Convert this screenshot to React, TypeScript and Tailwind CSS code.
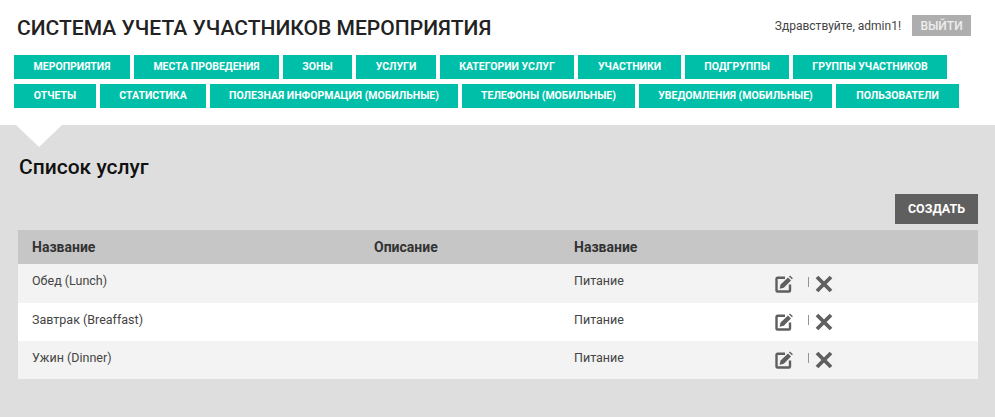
const rowOne = [
  { label: 'Мероприятия', width: 'w-[116px]' },
  { label: 'Места проведения', width: 'w-[145px]' },
  { label: 'Зоны', width: 'w-[69px]' },
  { label: 'Услуги', width: 'w-[80px]' },
  { label: 'Категории услуг', width: 'w-[134px]' },
  { label: 'Участники', width: 'w-[103px]' },
  { label: 'Подгруппы', width: 'w-[104px]' },
  { label: 'Группы участников', width: 'w-[154px]' },
];

const rowTwo = [
  { label: 'Отчеты', width: 'w-[82px]' },
  { label: 'Статистика', width: 'w-[106px]' },
  { label: 'Полезная информация (мобильные)', width: 'w-[248px]' },
  { label: 'Телефоны (мобильные)', width: 'w-[173px]' },
  { label: 'Уведомления (мобильные)', width: 'w-[193px]' },
  { label: 'Пользователи', width: 'w-[123px]' },
];

const services = [
  { name: 'Обед (Lunch)', category: 'Питание', bg: 'bg-[#f3f3f3]', height: 'h-[39px]' },
  { name: 'Завтрак (Breaffast)', category: 'Питание', bg: 'bg-white', height: 'h-[38px]' },
  { name: 'Ужин (Dinner)', category: 'Питание', bg: 'bg-[#f3f3f3]', height: 'h-[38px]' },
];

function MenuRow({ items }: { items: { label: string; width: string }[] }) {
  return (
    <div className="flex gap-1">
      {items.map((item) => (
        <a
          key={item.label}
          className={`${item.width} flex h-6 items-center justify-center bg-[#00bfa9] text-[10.5px] font-bold uppercase text-white`}
        >
          {item.label}
        </a>
      ))}
    </div>
  );
}

function EditIcon() {
  return (
    <svg width="18" height="18" viewBox="0 0 18 18" className="text-[#5f5f5f]">
      <path
        d="M10 2.8H2.5A1 1 0 0 0 1.5 3.8v11.7a1 1 0 0 0 1 1H14a1 1 0 0 0 1-1V9.5"
        fill="none"
        stroke="currentColor"
        strokeWidth="2.4"
      />
      <path d="M4.6 13.8l1-4.4 7.4-7 3 3-7.2 7.3z" fill="currentColor" />
      <path d="M14 1.4l1-1 2.9 2.9-1 1z" fill="currentColor" />
    </svg>
  );
}

function DeleteIcon() {
  return (
    <svg width="18" height="18" viewBox="0 0 18 18" className="text-[#5f5f5f]">
      <path d="M2 2l14 14M16 2L2 16" fill="none" stroke="currentColor" strokeWidth="3.8" />
    </svg>
  );
}

export default function App() {
  return (
    <div className="flex h-[417px] w-[995px] flex-col overflow-hidden bg-white font-['Roboto',sans-serif]">
      <header className="h-[125px] shrink-0 pl-[14px]">
        <div className="flex h-[55px] items-start justify-between pr-6">
          <h1 className="ml-[3px] mt-[14px] text-[21.05px] leading-7 font-medium text-[#222]">
            СИСТЕМА УЧЕТА УЧАСТНИКОВ МЕРОПРИЯТИЯ
          </h1>
          <div className="mt-[15px] flex items-center gap-[11px]">
            <span className="text-xs text-[#444]">Здравствуйте, admin1!</span>
            <a className="flex h-[21px] w-[59px] items-center justify-center bg-[#aeaeae] text-xs font-medium text-[#eee]">
              ВЫЙТИ
            </a>
          </div>
        </div>
        <nav className="flex flex-col gap-[5px]">
          <MenuRow items={rowOne} />
          <MenuRow items={rowTwo} />
        </nav>
      </header>

      <main className="relative flex-1 bg-[#dedede] pl-[18px] pr-[17px]">
        <div className="absolute left-4 top-0 h-[22px] w-[46px] bg-white [clip-path:polygon(0_0,100%_0,50%_100%)]" />
        <h2 className="ml-px pt-[28px] text-[21px] leading-7 font-medium text-[#111]">Список услуг</h2>
        <div className="mt-[13px] flex justify-end">
          <a className="flex h-[30px] w-[83px] items-center justify-center bg-[#5f5f5f] text-[12.5px] font-bold text-white">
            СОЗДАТЬ
          </a>
        </div>
        <table className="mt-1.5 w-full table-fixed border-collapse text-left">
          <thead>
            <tr className="h-[34px] bg-[#c6c6c6] text-sm text-[#333]">
              <th className="w-[356px] pl-3.5 font-bold">Название</th>
              <th className="w-[200px] font-bold">Описание</th>
              <th className="w-[201px] font-bold">Название</th>
              <th />
            </tr>
          </thead>
          <tbody className="text-[12.5px] text-[#444]">
            {services.map((service) => (
              <tr key={service.name} className={`${service.bg} ${service.height}`}>
                <td className="pl-3.5 pb-1">{service.name}</td>
                <td />
                <td className="pb-1">{service.category}</td>
                <td>
                  <div className="flex items-center">
                    <EditIcon />
                    <span className="ml-[15px] mb-1 h-2.5 w-px bg-[#8a9a90]" />
                    <span className="ml-1.5">
                      <DeleteIcon />
                    </span>
                  </div>
                </td>
              </tr>
            ))}
          </tbody>
        </table>
      </main>
    </div>
  );
}
